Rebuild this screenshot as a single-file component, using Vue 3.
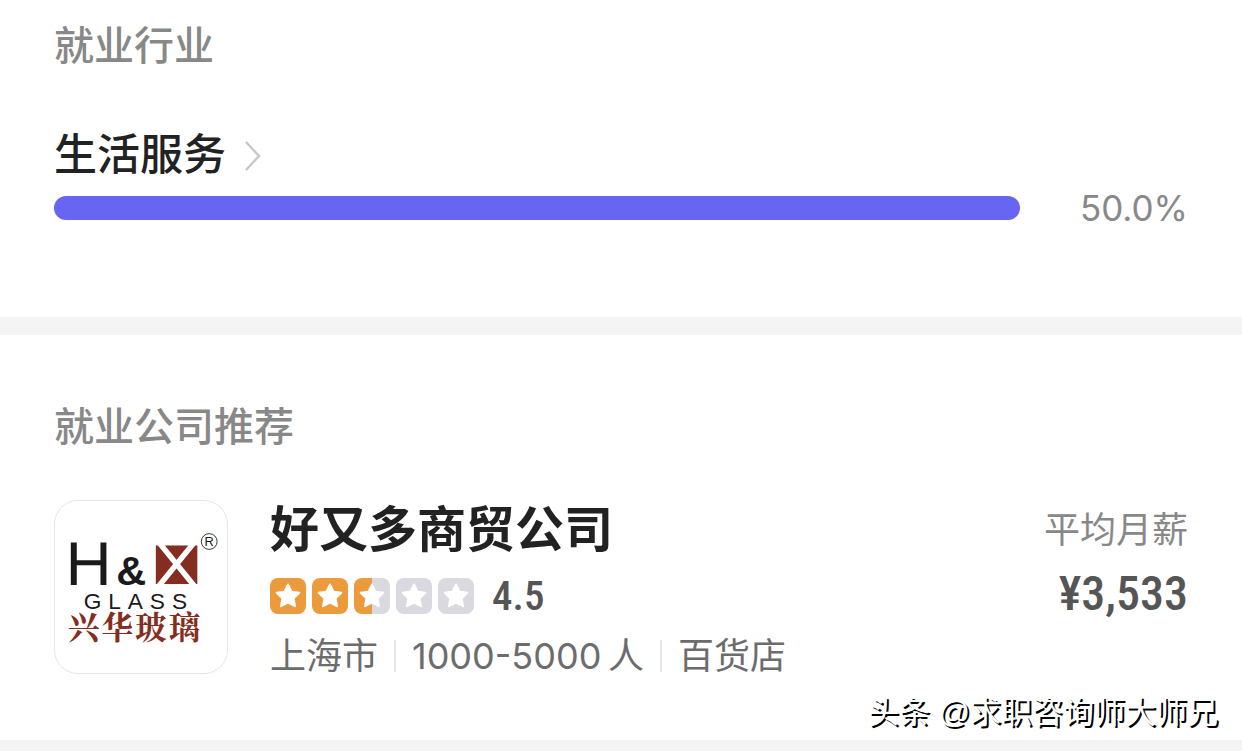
<script setup>
const share = 50
const stars = ['full', 'full', 'half', 'empty', 'empty']
const tags = ['上海市', '1000-5000\u2009人', '百货店']
</script>

<template>
  <main class="page">
    <section class="industry">
      <h2 class="caption">就业行业</h2>
      <a class="industry-link" href="#industry">
        <span>生活服务</span>
        <svg class="chevron" viewBox="0 0 18 36" aria-hidden="true">
          <path d="M2 6 L15 20 L2 34" fill="none" stroke="#c8c8c8" stroke-width="2.4" />
        </svg>
      </a>
      <div class="bar-row">
        <div class="bar"></div>
        <span class="percent">{{ share.toFixed(1) }}%</span>
      </div>
    </section>

    <section class="companies">
      <h2 class="caption">就业公司推荐</h2>
      <article class="company">
        <svg class="logo" viewBox="0 0 174 174" role="img" aria-label="H&amp;X Glass">
          <g fill="#1b191b">
            <path d="M16 42h6v18h24v-18h6v43h-6v-20h-24v20h-6z" />
            <text class="amp" x="62" y="85">&amp;</text>
            <text class="glass" x="29" y="109">GLASS</text>
            <text class="reg" x="156" y="46" text-anchor="middle">R</text>
          </g>
          <circle cx="156" cy="41" r="8" fill="none" stroke="#333" stroke-width="1" />
          <rect x="102" y="45" width="42" height="39" fill="#842d20" />
          <path d="M106 43 L141 86 M140 43 L105 86" stroke="#fff" stroke-width="5.5" />
          <text class="brand" x="13" y="140">兴华玻璃</text>
        </svg>
        <div class="info">
          <h3 class="name">好又多商贸公司</h3>
          <div class="rating">
            <span v-for="(star, i) in stars" :key="i" class="star" :class="star">
              <svg viewBox="0 0 36 36" aria-hidden="true">
                <path d="M18 6.5 L21.5 13.8 L29.3 14.8 L23.6 20.4 L25 28.2 L18 24.5 L11 28.2 L12.4 20.4 L6.7 14.8 L14.5 13.8 Z" fill="#fff" stroke="#fff" stroke-width="2" stroke-linejoin="round" />
              </svg>
            </span>
            <strong class="score">4.5</strong>
          </div>
          <ul class="tags">
            <li v-for="tag in tags" :key="tag">{{ tag }}</li>
          </ul>
        </div>
        <div class="salary">
          <span class="salary-label">平均月薪</span>
          <strong class="amount">¥3,533</strong>
        </div>
      </article>
      <p class="credit">头条 @求职咨询师大师兄</p>
    </section>
  </main>
</template>

<style>
body {
  background: #fff;
}
</style>

<style scoped>
.page {
  font-family: Inter, "Noto Sans CJK SC", sans-serif;
  color: #222;
  border-bottom: 11px solid #f4f4f4;
}

h2,
h3,
p,
ul {
  margin: 0;
  padding: 0;
}

.industry {
  padding: 16px 54px 85px;
  border-bottom: 18px solid #f4f4f4;
}

.caption {
  font-size: 40px;
  line-height: 60px;
  font-weight: 500;
  color: #888;
}

.industry-link {
  display: inline-flex;
  align-items: center;
  gap: 18px;
  margin-top: 48px;
  font-size: 43px;
  line-height: 60px;
  font-weight: 500;
  color: #222;
  text-decoration: none;
}

.chevron {
  width: 18px;
  height: 36px;
}

.bar-row {
  display: flex;
  align-items: center;
  gap: 60px;
}

.bar {
  flex: 1;
  height: 24px;
  border-radius: 12px;
  background: #6965f3;
}

.percent {
  font-size: 35px;
  line-height: 48px;
  color: #888;
}

.companies {
  position: relative;
  padding: 62px 54px 60px;
}

.company {
  display: flex;
  align-items: flex-start;
  margin-top: 43px;
}

.logo {
  box-sizing: border-box;
  width: 174px;
  height: 174px;
  flex: none;
  border: 1px solid #e6e6e6;
  border-radius: 24px;
}

.amp {
  font: 700 42px "Liberation Sans", sans-serif;
}

.glass {
  font: 400 23px "Liberation Sans", sans-serif;
  letter-spacing: 7px;
}

.reg {
  font: 400 13px "Liberation Sans", sans-serif;
}

.brand {
  font: 700 32px "Noto Serif CJK SC", "Noto Sans CJK SC", sans-serif;
  letter-spacing: 2px;
  fill: #842d20;
}

.info {
  flex: 1;
  margin-left: 42px;
}

.name {
  font-size: 49px;
  line-height: 60px;
  font-weight: 700;
}

.rating {
  display: flex;
  align-items: center;
  gap: 6px;
  height: 36px;
  margin-top: 18px;
}

.star {
  width: 36px;
  height: 36px;
  border-radius: 8px;
  background: #dad9e2;
}

.star svg {
  display: block;
}

.full {
  background: #eb9a3c;
}

.half {
  background: linear-gradient(90deg, #eb9a3c 50%, #dad9e2 50%);
}

.score {
  margin-left: 12px;
  font: 500 41px/36px "Roboto Condensed", Roboto, sans-serif;
  color: #555;
}

.tags {
  display: flex;
  align-items: center;
  margin-top: 18px;
  font-size: 36px;
  line-height: 48px;
  color: #6c6c6c;
  list-style: none;
}

.tags li {
  display: flex;
  align-items: center;
}

.tags li + li::before {
  content: "";
  width: 2px;
  height: 32px;
  margin: 0 16px;
  background: #e6e6e6;
}

.salary {
  display: flex;
  flex-direction: column;
  align-items: flex-end;
}

.salary-label {
  font-size: 36px;
  line-height: 60px;
  color: #888;
}

.amount {
  margin-top: 6px;
  font: 500 48px/56px "Roboto Condensed", Roboto, sans-serif;
  color: #555;
}

.credit {
  position: absolute;
  right: 24px;
  bottom: 5px;
  font-family: "Liberation Sans", "Noto Sans CJK SC", sans-serif;
  font-size: 31px;
  line-height: 44px;
  color: #fff;
  text-shadow: 2px 2px 0 #000;
}
</style>
